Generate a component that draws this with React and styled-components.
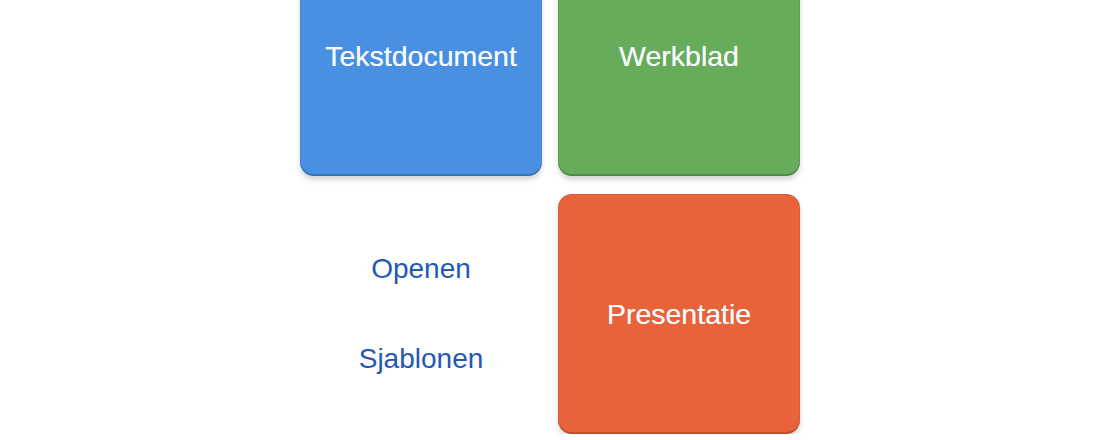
import React from 'react';
import styled, { createGlobalStyle } from 'styled-components';

const GlobalStyle = createGlobalStyle`
  html, body {
    margin: 0;
    padding: 0;
    background: #ffffff;
    overflow: hidden;
  }

  body {
    font-family: "Liberation Sans", Arial, sans-serif;
  }
`

const Grid = styled.div`
  display: grid;
  grid-template-columns: 242px 242px;
  grid-auto-rows: 240px;
  column-gap: 16px;
  row-gap: 18px;
  justify-content: center;
  margin-top: -64px;
`

const Tile = styled.button`
  display: flex;
  align-items: center;
  justify-content: center;
  border: none;
  border-radius: 14px;
  background: ${props => props.color};
  color: #f6fbff;
  font-family: "Liberation Sans", Arial, sans-serif;
  font-size: 28.5px;
  text-shadow: 0 0 0.6px rgba(255, 255, 255, 0.8);
  box-shadow:
    inset 0 -2px 0 rgba(0, 0, 0, 0.18),
    inset 0 0 0 1px rgba(0, 0, 0, 0.06),
    0 4px 5px rgba(0, 0, 0, 0.16);
  cursor: pointer;
`

const Links = styled.div`
  display: flex;
  flex-direction: column;
  align-items: center;
  justify-content: center;
  gap: 56px;
`

const LinkButton = styled.a`
  font-size: 28px;
  line-height: 34px;
  color: #2358b4;
  text-decoration: none;
`

const tiles = [
  { label: 'Tekstdocument', color: '#4a90e2' },
  { label: 'Werkblad', color: '#67ac5b' },
]

function App() {
  return (
    <>
      <GlobalStyle />
      <Grid>
        {tiles.map(tile => (
          <Tile key={tile.label} color={tile.color}>
            {tile.label}
          </Tile>
        ))}
        <Links>
          <LinkButton href="#">Openen</LinkButton>
          <LinkButton href="#">Sjablonen</LinkButton>
        </Links>
        <Tile color="#e8633a">Presentatie</Tile>
      </Grid>
    </>
  )
}

export default App
